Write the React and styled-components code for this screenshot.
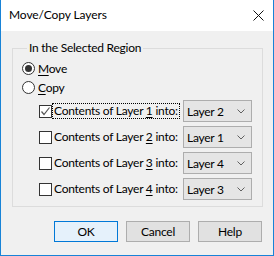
import React from "react";
import styled, { createGlobalStyle } from "styled-components";

const Global = createGlobalStyle`
  html, body { margin: 0; padding: 0; background: #ffffff; }
  * { box-sizing: border-box; }
  body { font-family: Lato, "Noto Sans", sans-serif; font-size: 12px; letter-spacing: -0.25px; color: #000; }
`;

const Window = styled.div`
  width: 274px;
  height: 256px;
  border: 1px solid #1883d7;
  border-top: none;
  display: flex;
  flex-direction: column;
  background: #f0f0f0;
`;

const TitleBar = styled.div`
  height: 31px;
  background: #ffffff;
  display: flex;
  align-items: center;
  justify-content: space-between;
  padding: 0 9px 1px 8px;
`;

const Title = styled.span`
  font-size: 12px;
  line-height: 16px;
  letter-spacing: -0.1px;
`;

const Body = styled.div`
  flex: 1;
  padding: 9px 10px 0 11px;
  display: flex;
  flex-direction: column;
`;

const Group = styled.fieldset`
  margin: 0;
  padding: 3px 0 6px 9px;
  border: 1px solid #dcdcdc;
  display: flex;
  flex-direction: column;
  min-width: 0;
`;

const Legend = styled.legend`
  padding: 0 2px;
  margin-left: 5px;
  line-height: 16px;
  font-size: 12px;
`;

const OptionRow = styled.label`
  height: 19px;
  display: flex;
  align-items: center;
  gap: 3px;
`;

const RadioCircle = styled.span`
  width: 13px;
  height: 13px;
  border-radius: 50%;
  border: 1px solid #333333;
  background: #ffffff;
  display: flex;
  align-items: center;
  justify-content: center;
  &::after {
    content: "";
    width: 7px;
    height: 7px;
    border-radius: 50%;
    background: ${(p) => (p.$on ? "#333333" : "transparent")};
  }
`;

const Key = styled.span`
  text-decoration: underline;
  text-underline-offset: 2px;
`;

const LayerList = styled.div`
  display: flex;
  flex-direction: column;
  gap: 4px;
  margin-top: 3px;
  padding-left: 17px;
`;

const LayerRow = styled.div`
  height: 22px;
  display: flex;
  align-items: center;
`;

const CheckLabel = styled.label`
  width: 144px;
  flex: none;
  display: flex;
  align-items: center;
`;

const CheckBox = styled.span`
  width: 13px;
  height: 13px;
  border: 1px solid #333333;
  background: #ffffff;
  display: flex;
  align-items: center;
  justify-content: center;
  flex: none;
`;

const LabelText = styled.span`
  white-space: nowrap;
  line-height: 14px;
  padding: 0 1px 0 1px;
  border: 1px dotted ${(p) => (p.$focus ? "#000000" : "transparent")};
`;

const Select = styled.div`
  width: 69px;
  height: 22px;
  flex: none;
  border: 1px solid #adadad;
  background: #e5e5e5;
  display: flex;
  align-items: center;
  justify-content: space-between;
  padding: 0 6px 0 3px;
  font-size: 12px;
`;

const Buttons = styled.div`
  display: flex;
  justify-content: flex-end;
  gap: 8px;
  margin-top: 14px;
  padding-right: 1px;
`;

const Button = styled.button`
  width: 64px;
  height: 21px;
  padding: 0;
  font-family: inherit;
  font-size: 12px;
  letter-spacing: inherit;
  color: #000;
  border: 1px solid ${(p) => (p.$primary ? "#0078d7" : "#adadad")};
  background: ${(p) => (p.$primary ? "#e5f1fb" : "#e1e1e1")};
`;

const Chevron = () => (
  <svg width="8" height="5" viewBox="0 0 8 5">
    <polyline points="0.5,0.5 4,4 7.5,0.5" fill="none" stroke="#606060" strokeWidth="1" />
  </svg>
);

const CloseIcon = () => (
  <svg width="11" height="11" viewBox="0 0 11 11">
    <path d="M0.5 0.5 L10.5 10.5 M10.5 0.5 L0.5 10.5" stroke="#111" strokeWidth="1" fill="none" />
  </svg>
);

const Check = () => (
  <svg width="11" height="11" viewBox="0 0 11 11">
    <polyline points="1.5,5.5 4,8.5 9.5,1.5" fill="none" stroke="#555" strokeWidth="1.2" />
  </svg>
);

const rows = [
  { n: "1", target: "Layer 2", checked: true },
  { n: "2", target: "Layer 1" },
  { n: "3", target: "Layer 4" },
  { n: "4", target: "Layer 3" },
];

export default function App() {
  return (
    <>
      <Global />
      <Window>
        <TitleBar>
          <Title>Move/Copy Layers</Title>
          <CloseIcon />
        </TitleBar>
        <Body>
          <Group>
            <Legend>In the Selected Region</Legend>
            <OptionRow>
              <RadioCircle $on />
              <span><Key>M</Key>ove</span>
            </OptionRow>
            <OptionRow>
              <RadioCircle />
              <span><Key>C</Key>opy</span>
            </OptionRow>
            <LayerList>
              {rows.map((r) => (
                <LayerRow key={r.n}>
                  <CheckLabel>
                    <CheckBox>{r.checked && <Check />}</CheckBox>
                    <LabelText $focus={r.checked}>
                      Contents of Layer <Key>{r.n}</Key> into:
                    </LabelText>
                  </CheckLabel>
                  <Select>
                    <span>{r.target}</span>
                    <Chevron />
                  </Select>
                </LayerRow>
              ))}
            </LayerList>
          </Group>
          <Buttons>
            <Button $primary>OK</Button>
            <Button>Cancel</Button>
            <Button>Help</Button>
          </Buttons>
        </Body>
      </Window>
    </>
  );
}
